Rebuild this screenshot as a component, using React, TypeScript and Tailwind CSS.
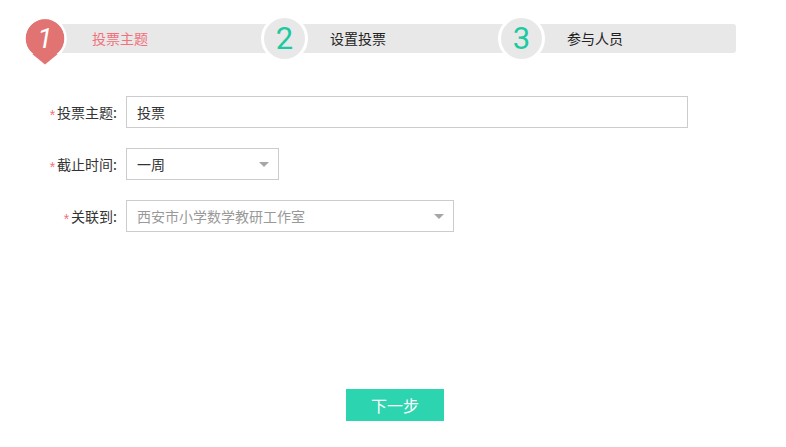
import React from "react";

const font = { fontFamily: '"Noto Sans CJK SC", "Noto Sans", sans-serif' };

function Caret() {
  return (
    <svg width="10" height="5" viewBox="0 0 10 5" className="shrink-0">
      <path d="M0 0 L10 0 L5 5 Z" fill="#a6a6a6" />
    </svg>
  );
}

function Field({ label, children }: { label: string; children: React.ReactNode }) {
  return (
    <div className="flex items-center h-[32px]">
      <div className="w-[117px] flex items-center justify-end text-[14px] text-[#333]">
        <span
          className="text-[#f2717b] text-[14px] mr-[2px] leading-none mt-[5px]"
          style={{ fontFamily: '"Liberation Sans", sans-serif' }}
        >
          *
        </span>
        <span>{label}:</span>
      </div>
      <div className="ml-[9px] h-full">{children}</div>
    </div>
  );
}

function NumCircle({ n }: { n: string }) {
  return (
    <div className="w-[47px] h-[47px] shrink-0 rounded-full bg-[#e8e8e8] border-[3px] border-white flex items-center justify-center">
      <span
        className="text-[31px] leading-none text-[#1cc9a1]"
        style={{ fontFamily: 'Roboto, "Liberation Sans", sans-serif' }}
      >
        {n}
      </span>
    </div>
  );
}

export default function App() {
  return (
    <div className="w-[786px] h-[447px] bg-white overflow-hidden" style={font}>
      {/* Steps */}
      <div className="mt-[24px] ml-[62px] w-[674px] h-[29px] bg-[#e8e8e8] rounded-r-[3px] flex items-center">
        <div className="w-[199px] flex items-center">
          <div className="relative -ml-[40px] w-[46px] h-[52px] shrink-0 mt-[11px]">
            <svg width="46" height="52" viewBox="0 0 46 52">
              <circle cx="23" cy="20.5" r="20.5" fill="#e27373" stroke="#ffffff" strokeWidth="2.5" />
              <path d="M10.2 35.9 L23 46.5 L35.8 35.9 Z" fill="#e27373" />
              <circle cx="23" cy="20.5" r="19" fill="#e27373" />
            </svg>
            <span
              className="absolute left-0 top-[7px] w-[46px] text-center text-white italic text-[28px] leading-none"
              style={{ fontFamily: 'Roboto, "Liberation Sans", sans-serif' }}
            >
              1
            </span>
          </div>
          <span className="ml-[24px] text-[14px] text-[#f2717b]">投票主题</span>
        </div>
        <div className="w-[237px] flex items-center">
          <NumCircle n="2" />
          <span className="ml-[22px] text-[14px] text-[#222]">设置投票</span>
        </div>
        <div className="flex-1 flex items-center">
          <NumCircle n="3" />
          <span className="ml-[22px] text-[14px] text-[#222]">参与人员</span>
        </div>
      </div>

      {/* Form */}
      <div className="mt-[43px] flex flex-col gap-[20px]">
        <Field label="投票主题">
          <div className="w-[562px] h-full border border-[#cccccc] flex items-center px-[10px] text-[14px] text-[#333]">
            投票
          </div>
        </Field>
        <Field label="截止时间">
          <div className="w-[153px] h-full border border-[#cccccc] flex items-center justify-between pl-[10px] pr-[9px] text-[14px] text-[#333]">
            <span>一周</span>
            <Caret />
          </div>
        </Field>
        <Field label="关联到">
          <div className="w-[328px] h-full border border-[#cccccc] flex items-center justify-between pl-[10px] pr-[9px] text-[14px] text-[#999]">
            <span>西安市小学数学教研工作室</span>
            <Caret />
          </div>
        </Field>
      </div>

      {/* Next */}
      <div className="mt-[157px] ml-[346px]">
        <button className="w-[98px] h-[32px] bg-[#2dd4b0] text-white text-[16px] flex items-center justify-center">
          下一步
        </button>
      </div>
    </div>
  );
}
